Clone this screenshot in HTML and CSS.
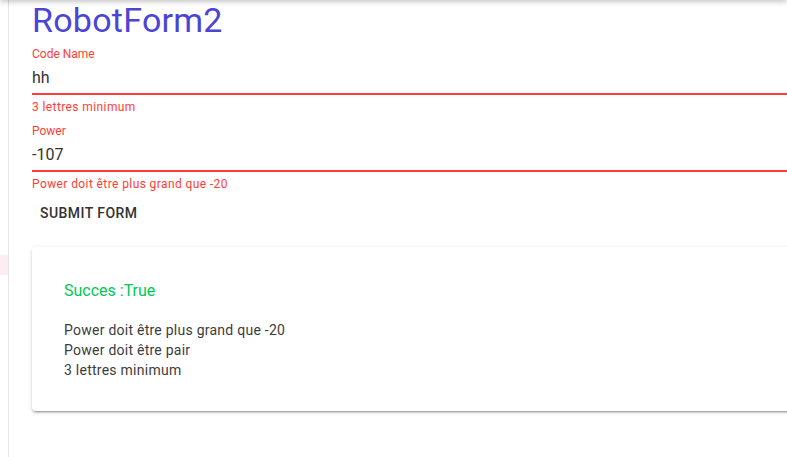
FILE: index.html
```html
<!DOCTYPE html>
<html lang="fr">
<head>
<meta charset="utf-8">
<title>RobotForm2</title>
<link rel="stylesheet" href="styles.css">
</head>
<body>
<div class="topbar"></div>
<div class="app">
  <nav class="sidebar">
    <div class="nav-active"></div>
  </nav>
  <main class="main">
    <h1 class="title">RobotForm2</h1>
    <form class="form">
      <div class="field">
        <label class="field-label">Code Name</label>
        <div class="field-input">hh</div>
        <div class="field-hint">3 lettres minimum</div>
      </div>
      <div class="field">
        <label class="field-label">Power</label>
        <div class="field-input">-107</div>
        <div class="field-hint">Power doit être plus grand que -20</div>
      </div>
      <button type="button" class="btn-text">Submit form</button>
    </form>
    <section class="card">
      <div class="card-title">Succes :True</div>
      <ul class="messages">
        <li>Power doit être plus grand que -20</li>
        <li>Power doit être pair</li>
        <li>3 lettres minimum</li>
      </ul>
    </section>
  </main>
</div>
</body>
</html>
```

FILE: styles.css
```css
html, body {
  margin: 0;
  padding: 0;
  background: #ffffff;
  overflow: hidden;
  font-family: Roboto, "Liberation Sans", Arial, sans-serif;
}

.topbar {
  position: fixed;
  top: -40px;
  left: 0;
  right: 0;
  height: 40px;
  box-shadow: 0 2px 5px rgba(0, 0, 0, 0.22);
  z-index: 10;
}

.app {
  display: flex;
  min-height: 457px;
}

.sidebar {
  width: 8px;
  flex: 0 0 8px;
  border-right: 1px solid #e4e4e4;
  padding-top: 255px;
  box-sizing: content-box;
}

.nav-active {
  height: 20px;
  background: #fdedf2;
}

.main {
  flex: 0 0 900px;
  padding-left: 23px;
}

.title {
  margin: 0;
  font-size: 34px;
  line-height: 40px;
  font-weight: 400;
  letter-spacing: 0.25px;
  color: #4b45d6;
}

.form {
  display: flex;
  flex-direction: column;
  align-items: flex-start;
  padding-top: 6px;
}

.field {
  width: 100%;
  display: flex;
  flex-direction: column;
  margin-bottom: 10px;
}

.field-label {
  font-size: 12px;
  line-height: 16px;
  color: #ff3d36;
  margin-bottom: 4px;
}

.field-input {
  font-size: 16px;
  line-height: 24px;
  color: #333333;
  padding-bottom: 3px;
  border-bottom: 2px solid #ff3d36;
}

.field-hint {
  margin-top: 6px;
  font-size: 12px;
  line-height: 12px;
  color: #ff3d36;
  letter-spacing: 0.4px;
}

.field:last-of-type {
  margin-bottom: 5px;
}

.btn-text {
  height: 36px;
  padding: 0 8px;
  border: 0;
  background: transparent;
  font-family: inherit;
  font-size: 14px;
  font-weight: 500;
  letter-spacing: 0.45px;
  text-transform: uppercase;
  color: #333333;
  cursor: pointer;
}

.card {
  margin-top: 16px;
  padding: 32px 32px 31px;
  border-radius: 4px;
  background: #ffffff;
  box-shadow: 0 3px 1px -2px rgba(0, 0, 0, 0.2), 0 2px 2px 0 rgba(0, 0, 0, 0.14), 0 1px 5px 0 rgba(0, 0, 0, 0.12);
}

.card-title {
  font-size: 16px;
  line-height: 24px;
  color: #00c853;
  margin-bottom: 17px;
}

.messages {
  list-style: none;
  margin: 0;
  padding: 0;
  font-size: 14px;
  line-height: 20px;
  letter-spacing: 0.25px;
  color: #3c3c3c;
}
```
